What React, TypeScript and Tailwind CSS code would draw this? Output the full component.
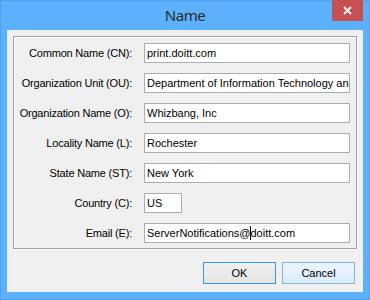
const rows: { label: string; value: string; narrow?: boolean; caret?: boolean }[] = [
  { label: "Common Name (CN):", value: "print.doitt.com" },
  { label: "Organization Unit (OU):", value: "Department of Information Technology and Telecommunications" },
  { label: "Organization Name (O):", value: "Whizbang, Inc" },
  { label: "Locality Name (L):", value: "Rochester" },
  { label: "State Name (ST):", value: "New York" },
  { label: "Country (C):", value: "US", narrow: true },
  { label: "Email (E):", value: "ServerNotifications@doitt.com", caret: true },
];

function Field({ value, narrow, caret }: { value: string; narrow?: boolean; caret?: boolean }) {
  const at = value.indexOf("@");
  return (
    <div
      className={`h-[20px] ${narrow ? "w-[38px]" : "w-[206px]"} border border-[#abadb3] bg-white flex items-center pl-[2px] overflow-hidden whitespace-nowrap`}
    >
      {caret ? (
        <span className="flex items-center">
          <span>{value.slice(0, at + 1)}</span>
          <span className="inline-block w-px h-[14px] bg-black -mr-px" />
          <span>{value.slice(at + 1)}</span>
        </span>
      ) : (
        <span>{value}</span>
      )}
    </div>
  );
}

export default function App() {
  return (
    <div
      className="w-[370px] h-[300px] bg-[#5cb0fc] border border-[#4ea2ee] flex flex-col text-[11px] text-black"
      style={{ fontFamily: '"Liberation Sans", Arial, sans-serif' }}
    >
      {/* title bar */}
      <div className="h-[29px] relative flex items-center justify-center">
        <span
          className="text-[15px] tracking-[-0.4px] text-[#2a2a2a] -mt-px"
          style={{ fontFamily: '"Noto Sans", "Open Sans", sans-serif' }}
        >
          Name
        </span>
        <div className="absolute top-[-1px] right-[6px] w-[31px] h-[21px] bg-[#c75050] flex items-center justify-center">
          <svg width="9" height="9" viewBox="0 0 9 9">
            <path d="M1 1 L8 8 M8 1 L1 8" stroke="#fff" strokeWidth="1.8" />
          </svg>
        </div>
      </div>

      {/* client area */}
      <div className="mx-[6px] mb-[7px] flex-1 bg-[#f0f0f0] flex flex-col px-[6px] pt-[6px]">
        <div className="h-[213px] border border-[#a0a0a0] shadow-[inset_1px_1px_0_#fff,1px_1px_0_#fff] pt-[6px] flex flex-col gap-[10px]">
          {rows.map((r) => (
            <div key={r.label} className="flex items-center">
              <div className="w-[119px] text-right pr-px tracking-[-0.2px]">{r.label}</div>
              <div className="ml-[11px]">
                <Field value={r.value} narrow={r.narrow} caret={r.caret} />
              </div>
            </div>
          ))}
        </div>

        <div className="mt-[13px] flex justify-end gap-[6px] pr-[2px]">
          <button className="w-[73px] h-[22px] border border-[#3399ff] bg-gradient-to-b from-[#f0f0f0] to-[#e5e5e5] flex items-center justify-center">
            OK
          </button>
          <button className="w-[73px] h-[22px] border border-[#7eb4ea] bg-gradient-to-b from-[#ecf4fc] to-[#dcecfc] flex items-center justify-center">
            Cancel
          </button>
        </div>
      </div>
    </div>
  );
}
